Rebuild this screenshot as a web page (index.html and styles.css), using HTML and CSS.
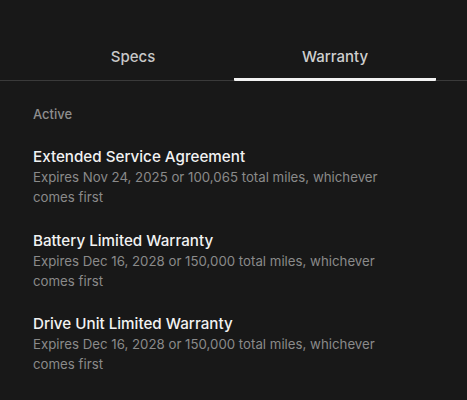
FILE: index.html
```html
<!DOCTYPE html>
<html>
<head>
<meta charset="utf-8">
<link rel="stylesheet" href="styles.css">
</head>
<body>
<div class="page">
  <div class="tabs">
    <div class="tab">Specs</div>
    <div class="tab active">Warranty</div>
  </div>
  <div class="content">
    <div class="section-label">Active</div>
    <div class="item">
      <div class="title">Extended Service Agreement</div>
      <div class="desc">Expires Nov 24, 2025 or 100,065 total miles, whichever comes first</div>
    </div>
    <div class="item">
      <div class="title">Battery Limited Warranty</div>
      <div class="desc">Expires Dec 16, 2028 or 150,000 total miles, whichever comes first</div>
    </div>
    <div class="item">
      <div class="title">Drive Unit Limited Warranty</div>
      <div class="desc">Expires Dec 16, 2028 or 150,000 total miles, whichever comes first</div>
    </div>
  </div>
</div>
</body>
</html>
```
FILE: styles.css
```css
html, body {
  margin: 0;
  padding: 0;
  background: #181818;
}
body {
  font-family: Inter, "Liberation Sans", sans-serif;
  width: 467px;
  height: 400px;
  overflow: hidden;
}
.page {
  padding-top: 42px;
}
.tabs {
  display: flex;
  padding: 0 31px 0 32px;
  border-bottom: 1px solid #3a3a3a;
}
.tab {
  flex: 1;
  text-align: center;
  font-size: 15px;
  font-weight: 500;
  color: #c8c8c8;
  height: 39px;
  line-height: 29px;
  margin-bottom: -1px;
  box-sizing: border-box;
}
.tab.active {
  color: #cfcfcf;
  border-bottom: 3px solid #f2f2f2;
  border-radius: 1px;
}
.content {
  padding: 23px 33px 0;
}
.section-label {
  font-size: 13px;
  font-weight: 500;
  color: #8e8e8e;
  line-height: 20px;
  margin-bottom: 23px;
}
.item {
  margin-bottom: 23.5px;
}
.title {
  font-size: 15.2px;
  font-weight: 500;
  color: #f2f2f2;
  line-height: 20px;
}
.desc {
  font-size: 13.25px;
  color: #8a8a8a;
  line-height: 20px;
  max-width: 370px;
}
```
